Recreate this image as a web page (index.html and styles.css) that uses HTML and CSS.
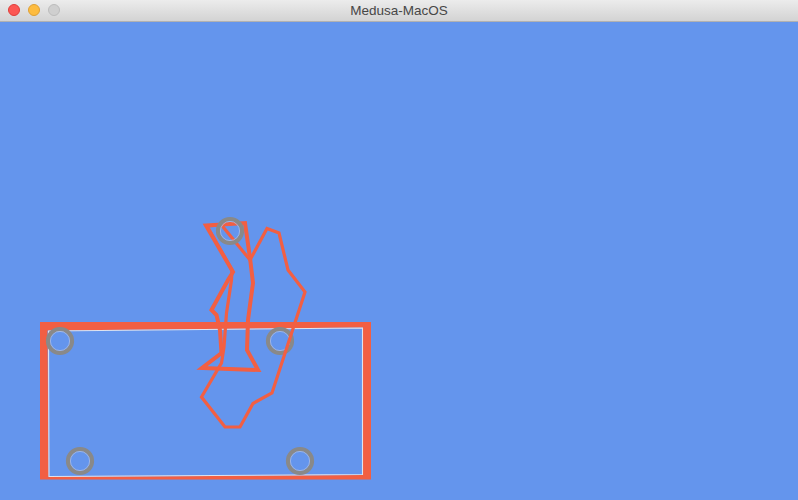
FILE: index.html
```html
<!DOCTYPE html>
<html>
<head>
<meta charset="utf-8">
<link rel="stylesheet" href="styles.css">
</head>
<body>
<div class="window">
  <div class="titlebar">
    <div class="lights">
      <span class="light close"></span>
      <span class="light min"></span>
      <span class="light max"></span>
    </div>
    <div class="title">Medusa-MacOS</div>
  </div>
  <div class="canvas">
    <svg class="scene" width="798" height="478" viewBox="0 22 798 478" xmlns="http://www.w3.org/2000/svg">
      <path class="frame" fill-rule="evenodd" d="M40 322 H371 V479.5 H40 Z M47.5 330.5 L363 327.5 L363 475 L48.5 477 Z"/>
      <path class="inner" d="M48.5 331 L362.5 328 L362.5 474.5 L49 476.5 Z"/>
      <g class="ring">
        <circle cx="60" cy="341" r="12"/>
        <circle cx="280" cy="341" r="12"/>
        <circle cx="80" cy="461" r="12"/>
        <circle cx="300" cy="461" r="12"/>
      </g>
      <g class="ring-in">
        <circle cx="60" cy="341" r="9.6"/>
        <circle cx="280" cy="341" r="9.6"/>
        <circle cx="80" cy="461" r="9.6"/>
        <circle cx="300" cy="461" r="9.6"/>
      </g>
      <polygon class="jelly a" points="206,225.5 245,223 250,258 253,283 248,320 247,350 258,370 202,368 221.5,353 220,330 216.5,315 211.5,310 228,280 233,272"/>
      <polygon class="jelly b" points="221.5,225 250,260 267,228.5 279,233 288,270 305,292 272,393 253,403.5 240,427 225,427 201.5,397 211.5,380 221.5,363 224,347 226.5,313 231.5,280 232,270 207,226"/>
      <circle class="ring" cx="230" cy="231" r="12"/>
      <circle class="ring-in" cx="230" cy="231" r="9.6"/>
    </svg>
  </div>
</div>
</body>
</html>
```

FILE: styles.css
```css
html, body {
  margin: 0;
  padding: 0;
  background: #6495ed;
}
.window {
  width: 798px;
  height: 500px;
  display: flex;
  flex-direction: column;
  overflow: hidden;
}
.titlebar {
  height: 21px;
  flex: 0 0 21px;
  position: relative;
  display: flex;
  align-items: center;
  justify-content: center;
  background: linear-gradient(#ececec, #d3d3d3);
  border-bottom: 1px solid #b1b1b1;
}
.lights {
  position: absolute;
  left: 8px;
  top: 4px;
  display: flex;
  gap: 8px;
}
.light {
  width: 12px;
  height: 12px;
  border-radius: 50%;
  box-sizing: border-box;
}
.close { background: #fc5753; border: 1px solid #df3e3a; }
.min { background: #fdbc40; border: 1px solid #dea034; }
.max { background: #cfcfcf; border: 1px solid #bcbcbc; }
.title {
  font-family: "Liberation Sans", Arial, sans-serif;
  font-size: 13.5px;
  color: #474747;
  line-height: 21px;
}
.canvas {
  flex: 1;
  background: #6495ed;
}
.scene {
  display: block;
}
.frame {
  fill: #f25f43;
}
.inner {
  fill: none;
  stroke: #f4f1ee;
  stroke-width: 1.1;
  opacity: 0.85;
}
.ring circle, circle.ring {
  fill: none;
  stroke: #898989;
  stroke-width: 4.2;
}
.ring-in circle, circle.ring-in {
  fill: none;
  stroke: #a9bde6;
  stroke-width: 0.8;
}
.jelly {
  fill: none;
  stroke: #f25f43;
  stroke-linejoin: miter;
}
.jelly.a {
  stroke-width: 4;
}
.jelly.b {
  stroke-width: 3.2;
}
```
